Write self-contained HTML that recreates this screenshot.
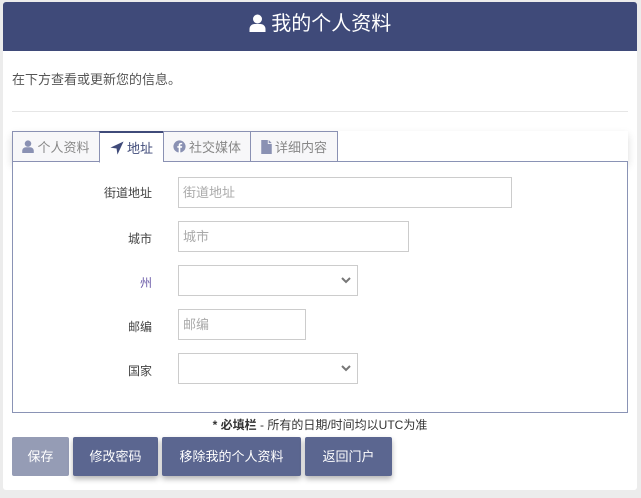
<!DOCTYPE html>
<html><head><meta charset="utf-8"><style>
*{box-sizing:border-box;margin:0;padding:0}
body{width:641px;height:498px;background:#ececec;font-family:"Liberation Sans","Noto Sans CJK SC",sans-serif;position:relative;overflow:hidden}
.card{position:absolute;left:3px;top:2px;width:634px;height:488px;background:#fff;border-radius:3px}
.hdr{position:absolute;left:0;top:0;width:634px;height:49px;background:#3f4a79;border-radius:3px 3px 0 0;color:#fff;font-size:20px;text-align:center;line-height:45px}
.intro{position:absolute;left:9px;top:67px;font-size:13px;color:#555}
.hr{position:absolute;left:9px;top:109px;width:616px;height:1px;background:#e6e6e6}
.tabshadow{position:absolute;left:9px;top:129px;width:616px;height:31px;box-shadow:0 4px 8px rgba(0,0,0,.15)}
.tabs{position:absolute;left:9px;top:129px;height:31px;display:flex}
.tab{height:31px;border:1px solid #8a91b3;border-right:none;background:#f7f7f9;color:#888;font-size:13px;display:flex;align-items:center;justify-content:center;gap:3px}
.tab:last-child{border-right:1px solid #8a91b3}
.tab.act{background:#fff;color:#3f4a79;border-bottom:1px solid #fff;border-top:2px solid #3f4a79;height:32px}
.box{position:absolute;left:9px;top:159px;width:616px;height:252px;border:1px solid #8a93b5;background:#fff}
.lbl{position:absolute;font-size:12px;color:#444;text-align:right;width:140px}
.inp{position:absolute;left:175px;height:31px;border:1px solid #ccc;font-size:13px;color:#aaa;padding-left:4px;line-height:29px}
.sel svg{position:absolute;right:6px;top:11px}
.note{position:absolute;left:0;width:634px;top:414px;text-align:center;font-size:12px;color:#333}
.btn{position:absolute;top:435px;height:39px;background:#5b6690;color:#fff;font-size:13px;line-height:39px;text-align:center;border-radius:2px;box-shadow:0 3px 6px rgba(0,0,0,.3)}
</style></head><body>
<div class="card">
<div class="hdr"><svg width="17" height="18" viewBox="0 0 16 18" style="vertical-align:-2px"><circle cx="8" cy="5" r="4.5" fill="#fff"/><path d="M0 18v-3c0-3 2.5-5 5-5h6c2.5 0 5 2 5 5v3z" fill="#fff"/></svg> 我的个人资料</div>
<div class="intro">在下方查看或更新您的信息。</div>
<div class="hr"></div>
<div class="tabshadow"></div>
<div class="box"></div>
<div class="tabs">
<div class="tab" style="width:87px"><svg width="12" height="13" viewBox="0 0 16 18"><circle cx="8" cy="5" r="4.5" fill="#8a91b3"/><path d="M0 18v-3c0-3 2.5-5 5-5h6c2.5 0 5 2 5 5v3z" fill="#8a91b3"/></svg>个人资料</div>
<div class="tab act" style="width:64px"><svg width="14" height="14" viewBox="0 0 16 16"><path d="M15.5 .5L.5 7.5l7 1 1 7z" fill="#3f4a79"/></svg>地址</div>
<div class="tab" style="width:87px"><svg width="13" height="13" viewBox="0 0 16 16"><circle cx="8" cy="8" r="7.5" fill="#8a91b3"/><path d="M9 16V9.5h2l.3-2H9V6.3c0-.6.3-1 1-1h1.3V3.5H9.8C8 3.5 7 4.5 7 6.2v1.3H5.3v2H7V16z" fill="#fff"/></svg>社交媒体</div>
<div class="tab" style="width:88px"><svg width="11" height="14" viewBox="0 0 12 16"><path d="M0 0h7.5v4.5H12V16H0zM8.5 0L12 3.5H8.5z" fill="#8a91b3"/></svg>详细内容</div>
</div>
<div class="lbl" style="left:9px;top:182px">街道地址</div><div class="inp" style="top:175px;width:334px">街道地址</div>
<div class="lbl" style="left:9px;top:228px">城市</div><div class="inp" style="top:219px;width:231px">城市</div>
<div class="lbl" style="left:9px;top:272px;color:#6a5aa8">州</div><div class="inp sel" style="top:263px;width:180px"><svg width="10" height="7" viewBox="0 0 10 7"><path d="M1 1l4 4 4-4" stroke="#777" stroke-width="2" fill="none"/></svg></div>
<div class="lbl" style="left:9px;top:316px">邮编</div><div class="inp" style="top:307px;width:128px">邮编</div>
<div class="lbl" style="left:9px;top:360px">国家</div><div class="inp sel" style="top:351px;width:180px"><svg width="10" height="7" viewBox="0 0 10 7"><path d="M1 1l4 4 4-4" stroke="#777" stroke-width="2" fill="none"/></svg></div>
<div class="note"><b>* 必填栏</b> - 所有的日期/时间均以UTC为准</div>
<div class="btn" style="left:9px;width:57px;background:#959cb5;box-shadow:none">保存</div>
<div class="btn" style="left:70px;width:85px">修改密码</div>
<div class="btn" style="left:159px;width:139px">移除我的个人资料</div>
<div class="btn" style="left:302px;width:87px">返回门户</div>
</div>
</body></html>
